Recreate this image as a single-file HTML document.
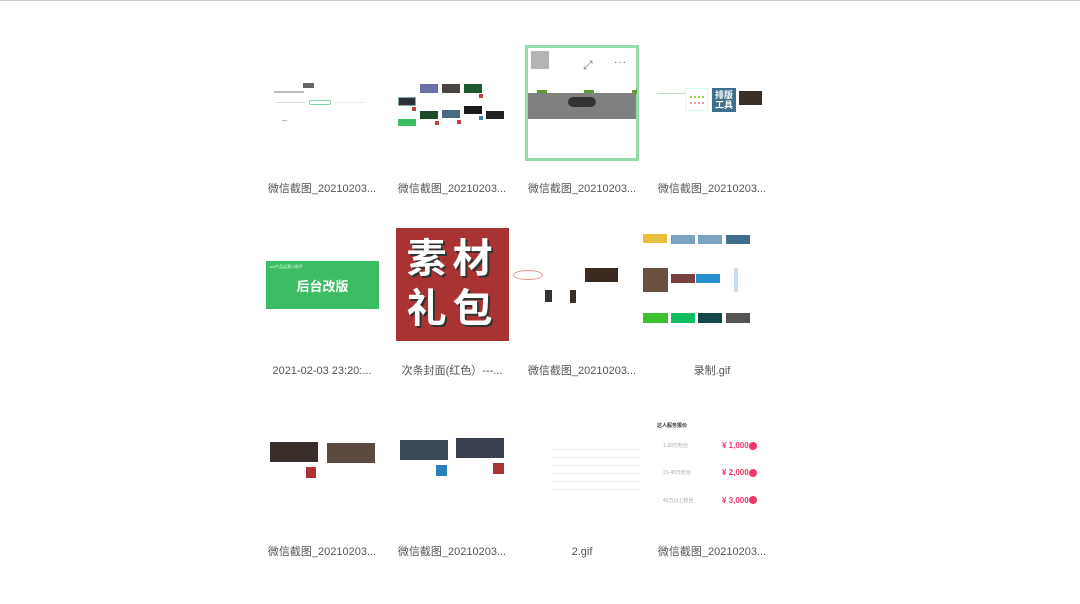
<!DOCTYPE html>
<html><head><meta charset="utf-8"><style>
body{margin:0;width:1080px;height:604px;background:#fff;position:relative;overflow:hidden;font-family:"Liberation Sans","Noto Sans CJK SC",sans-serif}
div{position:absolute;box-sizing:border-box}
.l{font-size:11px;line-height:14px;height:14px;color:#555;width:130px;text-align:center;white-space:nowrap}
</style></head><body>
<div style="left:0;top:0;width:1080px;height:1px;background:#ccc"></div>

<!-- Row1 cell1 -->
<div style="left:303px;top:83px;width:11px;height:5px;background:#666"></div>
<div style="left:274px;top:91px;width:30px;height:2px;background:#bbb"></div>
<div style="left:275px;top:102px;width:30px;height:1px;background:#ddd"></div>
<div style="left:309px;top:100px;width:22px;height:5px;border:1px solid #7bd6a0;border-radius:2px"></div>
<div style="left:335px;top:102px;width:30px;height:1px;background:#eee"></div>
<div style="left:282px;top:120px;width:5px;height:1px;background:#bbb"></div>

<!-- Row1 cell2 -->
<div style="left:398px;top:97px;width:18px;height:9px;background:#2e3238;border:1px solid #8aa"></div>
<div style="left:420px;top:84px;width:18px;height:9px;background:#6a70a8"></div>
<div style="left:442px;top:84px;width:18px;height:9px;background:#4a4540"></div>
<div style="left:464px;top:84px;width:18px;height:9px;background:#1d5a2e"></div>
<div style="left:398px;top:119px;width:18px;height:7px;background:#3cbd64"></div>
<div style="left:420px;top:111px;width:18px;height:8px;background:#1e4a2a"></div>
<div style="left:442px;top:110px;width:18px;height:8px;background:#4a6a80"></div>
<div style="left:464px;top:106px;width:18px;height:8px;background:#1a1a1a"></div>
<div style="left:486px;top:111px;width:18px;height:8px;background:#222"></div>
<div style="left:412px;top:107px;width:4px;height:4px;background:#b44"></div>
<div style="left:435px;top:121px;width:4px;height:4px;background:#b44"></div>
<div style="left:457px;top:120px;width:4px;height:4px;background:#b44"></div>
<div style="left:479px;top:94px;width:4px;height:4px;background:#b44"></div>
<div style="left:479px;top:116px;width:4px;height:4px;background:#48a"></div>

<!-- Row1 cell3 -->
<div style="left:525px;top:45px;width:114px;height:116px;border:3px solid #93dcaa;background:#fff"></div>
<div style="left:531px;top:51px;width:18px;height:18px;background:#b5b5b5"></div>
<div style="left:583px;top:58px;font-size:12px;color:#777">⤢</div>
<div style="left:614px;top:57px;font-size:10px;color:#555;letter-spacing:1px">···</div>
<div style="left:537px;top:90px;width:10px;height:4px;background:#5a9e2a"></div>
<div style="left:584px;top:90px;width:10px;height:4px;background:#5a9e2a"></div>
<div style="left:632px;top:90px;width:5px;height:4px;background:#5a9e2a"></div>
<div style="left:528px;top:93px;width:108px;height:26px;background:#808080"></div>
<div style="left:568px;top:97px;width:28px;height:10px;background:#333;border-radius:5px"></div>

<!-- Row1 cell4 -->
<div style="left:657px;top:93px;width:40px;height:1px;background:#bdb"></div>
<div style="left:685px;top:88px;width:23px;height:23px;border:1px solid #cfe;background:#fff"></div>
<div style="left:690px;top:96px;width:14px;height:8px;border-top:2px dotted #9c4;border-bottom:2px dotted #e9a"></div>
<div style="left:712px;top:88px;width:24px;height:24px;background:#3f6e8c;color:#fff;font-size:9px;line-height:10px;text-align:center;padding-top:2px;font-weight:bold">排版<br>工具</div>
<div style="left:739px;top:91px;width:23px;height:14px;background:#3a3028"></div>

<!-- Row2 -->
<div style="left:266px;top:261px;width:113px;height:48px;background:#3cbd64;color:#fff;font-weight:bold;font-size:13px;text-align:center;padding-top:15px">后台改版</div>
<div style="left:269px;top:264px;font-size:4px;color:#dfd">xxx产品运营小助手</div>
<div style="left:396px;top:228px;width:113px;height:113px;background:#a93232;color:#fff;font-weight:bold;font-size:40px;line-height:50px;text-align:center;padding-top:6px;letter-spacing:6px;text-shadow:2px 2px 0 #333">素材<br>礼包</div>
<div style="left:513px;top:270px;width:30px;height:10px;border:1px solid #e88;border-radius:50%"></div>
<div style="left:545px;top:290px;width:7px;height:12px;background:#333"></div>
<div style="left:570px;top:290px;width:6px;height:13px;background:#3a2e20"></div>
<div style="left:585px;top:268px;width:33px;height:14px;background:#3a2a20"></div>
<div style="left:643px;top:234px;width:24px;height:9px;background:#e8c040"></div>
<div style="left:671px;top:235px;width:24px;height:9px;background:#7aa3c0"></div>
<div style="left:698px;top:235px;width:24px;height:9px;background:#7aa3c0"></div>
<div style="left:726px;top:235px;width:24px;height:9px;background:#3f6e8c"></div>
<div style="left:643px;top:268px;width:25px;height:24px;background:#6a5040"></div>
<div style="left:671px;top:274px;width:24px;height:9px;background:#7a4040"></div>
<div style="left:696px;top:274px;width:24px;height:9px;background:#2a90d0"></div>
<div style="left:734px;top:268px;width:4px;height:24px;background:#cde"></div>
<div style="left:643px;top:313px;width:25px;height:10px;background:#3cc030"></div>
<div style="left:671px;top:313px;width:24px;height:10px;background:#10c060"></div>
<div style="left:698px;top:313px;width:24px;height:10px;background:#144848"></div>
<div style="left:726px;top:313px;width:24px;height:10px;background:#555"></div>

<!-- Row3 -->
<div style="left:270px;top:442px;width:48px;height:20px;background:#3a2e2a"></div>
<div style="left:327px;top:443px;width:48px;height:20px;background:#5a4a40"></div>
<div style="left:306px;top:467px;width:10px;height:11px;background:#a33"></div>
<div style="left:400px;top:440px;width:48px;height:20px;background:#3a4858"></div>
<div style="left:456px;top:438px;width:48px;height:20px;background:#3a4050"></div>
<div style="left:436px;top:465px;width:11px;height:11px;background:#2a80b8"></div>
<div style="left:493px;top:463px;width:11px;height:11px;background:#a33"></div>
<div style="left:550px;top:442px;width:90px;height:50px;background:repeating-linear-gradient(#fff 0 7px,#eee 7px 8px)"></div>
<div style="left:657px;top:422px;font-size:5px;color:#333;font-weight:bold">达人服务报价</div>
<div style="left:663px;top:442px;font-size:5px;color:#aaa">1-20万粉丝</div>
<div style="left:663px;top:469px;font-size:5px;color:#aaa">21-40万粉丝</div>
<div style="left:663px;top:497px;font-size:5px;color:#aaa">40万以上粉丝</div>
<div style="left:722px;top:441px;font-size:8px;color:#f0386a;font-weight:bold">¥ 1,000</div>
<div style="left:722px;top:468px;font-size:8px;color:#f0386a;font-weight:bold">¥ 2,000</div>
<div style="left:722px;top:496px;font-size:8px;color:#f0386a;font-weight:bold">¥ 3,000</div>
<div style="left:749px;top:442px;width:8px;height:8px;border-radius:50%;background:#f0386a"></div>
<div style="left:749px;top:469px;width:8px;height:8px;border-radius:50%;background:#f0386a"></div>
<div style="left:749px;top:496px;width:8px;height:8px;border-radius:50%;background:#f0386a"></div>

<!-- labels -->
<div class="l" style="left:257px;top:182px">微信截图_20210203...</div>
<div class="l" style="left:387px;top:182px">微信截图_20210203...</div>
<div class="l" style="left:517px;top:182px">微信截图_20210203...</div>
<div class="l" style="left:647px;top:182px">微信截图_20210203...</div>
<div class="l" style="left:257px;top:364px">2021-02-03 23:20:...</div>
<div class="l" style="left:387px;top:364px">次条封面(红色）---...</div>
<div class="l" style="left:517px;top:364px">微信截图_20210203...</div>
<div class="l" style="left:647px;top:364px">录制.gif</div>
<div class="l" style="left:257px;top:545px">微信截图_20210203...</div>
<div class="l" style="left:387px;top:545px">微信截图_20210203...</div>
<div class="l" style="left:517px;top:545px">2.gif</div>
<div class="l" style="left:647px;top:545px">微信截图_20210203...</div>
</body></html>
